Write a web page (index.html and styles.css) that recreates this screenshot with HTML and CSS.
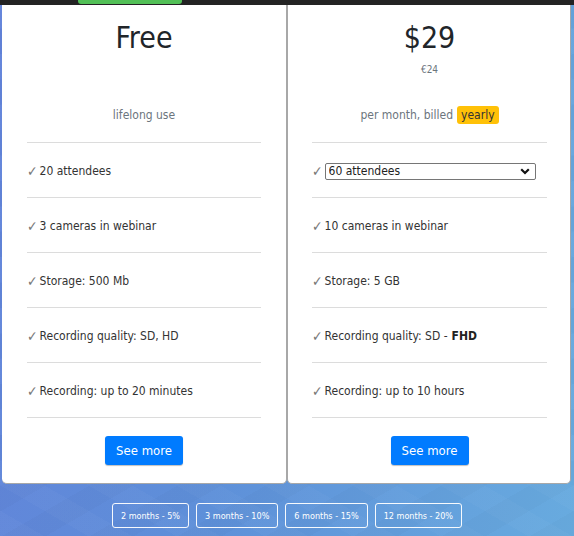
FILE: index.html
```html
<!DOCTYPE html>
<html lang="en">
<head>
<meta charset="utf-8">
<title>Pricing</title>
<link rel="stylesheet" href="styles.css">
</head>
<body>
<div class="page">
  <div class="topbar"><span class="tab"></span></div>
  <div class="cards">
    <section class="card card-left">
      <div class="head">
        <div class="price">Free</div>
      </div>
      <div class="billing">lifelong use</div>
      <ul class="features">
        <li><span class="check">✓</span>20 attendees</li>
        <li><span class="check">✓</span>3 cameras in webinar</li>
        <li><span class="check">✓</span>Storage: 500 Mb</li>
        <li><span class="check">✓</span>Recording quality: SD, HD</li>
        <li><span class="check">✓</span>Recording: up to 20 minutes</li>
      </ul>
      <div class="actions"><button class="btn">See more</button></div>
    </section>
    <section class="card card-right">
      <div class="head">
        <div class="price">$29</div>
        <div class="euro">€24</div>
      </div>
      <div class="billing">per month, billed <span class="badge">yearly</span></div>
      <ul class="features">
        <li><span class="check">✓</span><span class="select-box"><select class="select"><option>60 attendees</option><option>100 attendees</option></select><svg class="chev" width="10" height="7" viewBox="0 0 10 7"><path d="M1.2 1.2 L5 5 L8.8 1.2" fill="none" stroke="#111" stroke-width="2.2"/></svg></span></li>
        <li><span class="check">✓</span>10 cameras in webinar</li>
        <li><span class="check">✓</span>Storage: 5 GB</li>
        <li><span class="check">✓</span>Recording quality: SD - <b>FHD</b></li>
        <li><span class="check">✓</span>Recording: up to 10 hours</li>
      </ul>
      <div class="actions"><button class="btn">See more</button></div>
    </section>
  </div>
  <div class="periods">
    <button class="period">2 months - 5%</button>
    <button class="period">3 months - 10%</button>
    <button class="period">6 months - 15%</button>
    <button class="period">12 months - 20%</button>
  </div>
</div>
</body>
</html>
```
FILE: styles.css
```css
html, body {
  margin: 0;
  padding: 0;
}
body {
  width: 574px;
  height: 536px;
  overflow: hidden;
  font-family: "DejaVu Sans Condensed", "DejaVu Sans", "Liberation Sans", sans-serif;
  font-stretch: condensed;
  background:
    repeating-linear-gradient(30deg, rgba(255, 255, 255, 0.025) 0 22px, rgba(255, 255, 255, 0) 22px 44px),
    repeating-linear-gradient(-30deg, rgba(0, 0, 0, 0.02) 0 22px, rgba(0, 0, 0, 0) 22px 44px),
    linear-gradient(100deg, #6283da 0%, #5e90d9 45%, #68abdf 100%);
  color: #333;
}
.page {
  display: flex;
  flex-direction: column;
  height: 536px;
}
.topbar {
  height: 5px;
  background: #232323;
  display: flex;
  padding-left: 78px;
}
.tab {
  width: 104px;
  height: 4px;
  background: #52c057;
  border-radius: 0 0 3px 3px;
}
.cards {
  display: flex;
  padding: 0 3px 0 2px;
}
.card {
  background: #fff;
  border-bottom: 1px solid #a8a8a8;
  border-radius: 0 0 5px 5px;
  display: flex;
  flex-direction: column;
  height: 479px;
  box-sizing: border-box;
}
.card-left {
  width: 285px;
  border-right: 1px solid #a8a8a8;
  padding: 15px 25px 0 25px;
}
.card-right {
  width: 284px;
  border-left: 1px solid #a8a8a8;
  border-right: 1px solid #a8a8a8;
  padding: 15px 23px 0 24px;
}
.head {
  height: 85px;
  display: flex;
  flex-direction: column;
  align-items: center;
}
.price {
  font-size: 30px;
  line-height: 36px;
  color: #212529;
}
.euro {
  margin-top: 7px;
  font-size: 10px;
  line-height: 14px;
  color: #6c757d;
}
.billing {
  height: 18px;
  padding-top: 1px;
  display: flex;
  align-items: center;
  justify-content: center;
  gap: 4px;
  font-size: 12px;
  color: #6c757d;
}
.badge {
  background: #ffc107;
  color: #333;
  border-radius: 3px;
  padding: 0 4px;
  height: 18px;
  line-height: 18px;
}
.features {
  list-style: none;
  margin: 18px 0 0 0;
  padding: 0;
  border-top: 1px solid #dcdcdc;
}
.features li {
  height: 55px;
  box-sizing: border-box;
  padding-top: 2px;
  border-bottom: 1px solid #dcdcdc;
  display: flex;
  align-items: center;
  font-size: 12px;
  color: #333;
}
.features b {
  margin-left: 4px;
  color: #222;
}
.check {
  color: #777;
  font-size: 14px;
  line-height: 1;
  margin-right: 2px;
}
.select-box {
  display: flex;
  align-items: center;
  width: 211px;
  height: 17px;
  box-sizing: border-box;
  border: 1px solid #767676;
  border-radius: 2px;
}
.select {
  flex: 1;
  appearance: none;
  -webkit-appearance: none;
  border: none;
  background: transparent;
  font: inherit;
  font-size: 12px;
  color: #222;
  padding: 0 0 0 3px;
  height: 15px;
  line-height: 15px;
  outline: none;
}
.chev {
  margin-right: 5px;
}
.actions {
  display: flex;
  justify-content: center;
  margin-top: 18px;
}
.btn {
  width: 78px;
  height: 29px;
  background: #007bff;
  color: #fff;
  border: none;
  border-radius: 3px;
  font: inherit;
  font-size: 13px;
  box-shadow: 0 1px 1px rgba(0, 0, 0, 0.25);
  padding: 0;
}
.periods {
  display: flex;
  justify-content: center;
  gap: 7px;
  margin-top: 19px;
}
.period {
  height: 25px;
  background: transparent;
  border: 1px solid rgba(255, 255, 255, 0.95);
  border-radius: 3px;
  color: #fff;
  font: inherit;
  font-size: 9px;
  padding: 0 8px;
}
```
